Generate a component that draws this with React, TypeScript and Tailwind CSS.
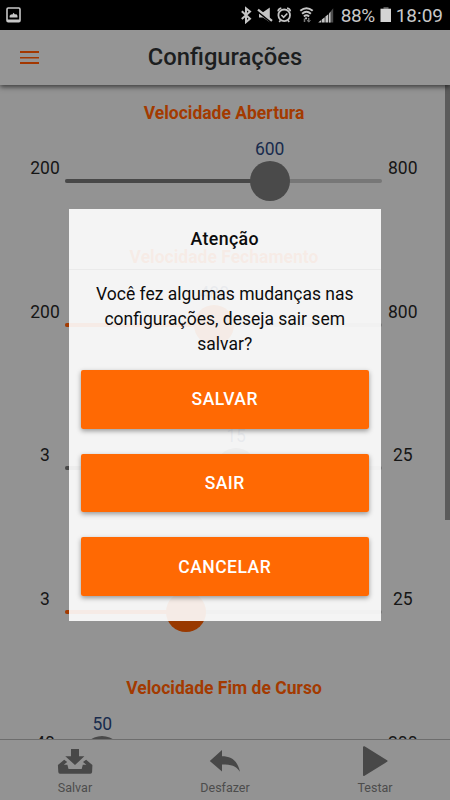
import React from "react";

type Setting = {
  title: string;
  min: number;
  max: number;
  value: number;
  active: boolean;
};

const settings: Setting[] = [
  { title: "Velocidade Abertura", min: 200, max: 800, value: 600, active: false },
  { title: "Velocidade Fechamento", min: 200, max: 800, value: 480, active: true },
  { title: "", min: 3, max: 25, value: 15, active: false },
  { title: "", min: 3, max: 25, value: 11, active: true },
  { title: "Velocidade Fim de Curso", min: 40, max: 200, value: 50, active: false },
];

function StatusBar() {
  return (
    <div className="flex h-[30px] shrink-0 items-center bg-black pl-[6px] pr-[7px] text-[#c8c8c8]">
      <svg width="15" height="16" viewBox="0 0 15 16">
        <rect x="1" y="1" width="13" height="13.6" rx="1.2" fill="none" stroke="#c8c8c8" strokeWidth="1.6" />
        <path d="M1 12.5h13v2H1zM3.6 10.6V8.7l1.5-1.5 1 .6 1.5-2 1.4 1.7 1.2-.4 1.3 1.6v1.9z" fill="#c8c8c8" />
      </svg>
      <div className="ml-auto flex items-center">
        <svg width="100" height="18" viewBox="241 6 100 18" className="mr-[1px]" fill="none" stroke="#c4c4c4">
          <path d="M242.8 11.2l8.2 7.6-4 3.3V8.4l4 3.1-8.2 7.4" strokeWidth="2" />
          <path d="M260 12.3h4l6.8-4.7v14.6l-6.8-4.6h-4z" fill="#c4c4c4" stroke="none" />
          <path d="M258 10.8l14.5 11.6" stroke="#000" strokeWidth="2" />
          <path d="M259 9.6l14 11.2" strokeWidth="2.2" />
          <circle cx="285.2" cy="15.3" r="5.8" strokeWidth="1.8" />
          <path d="M282.4 15l2.2 2.3 3.7-3.8" strokeWidth="1.6" />
          <path d="M279 11.3a4 4 0 0 1 3.3-3.2M291.4 11.3a4 4 0 0 0-3.3-3.2M281.6 20.2l-1.4 1.8M288.8 20.2l1.4 1.8" strokeWidth="1.6" />
          <path d="M301.3 10.8q6.2-5.2 12.4 0M303.1 13.7q4.4-3.8 8.8 0M304.9 16.4q2.6-2.3 5.2 0" strokeWidth="2" />
          <circle cx="307" cy="18.3" r="1.1" fill="#c4c4c4" stroke="none" />
          <path d="M305.5 22v-3.4M309.7 18v4" stroke="#777" strokeWidth="1.5" />
          <path d="M308 20l1.7 2.2 1.8-2.2" stroke="#777" />
          <path d="M319.2 22.6l3-2.5v2.5zM322.8 19.4l2.9-2.2v5.4h-2.9zM326.4 16.5l2.9-2.2v8.3h-2.9z" fill="#c4c4c4" stroke="none" />
          <path d="M330 13.5l4.2-5.3v14.4H330z" fill="#4d4d4d" stroke="none" />
          <path d="M330 13.5l1.5-1.7v10.8H330z" fill="#c4c4c4" stroke="none" />
        </svg>
        <span className="mt-px w-[38px] whitespace-nowrap text-[19px] leading-6 tracking-[-0.4px]">88%</span>
        <svg width="12" height="16" viewBox="0 0 12 16" className="ml-px mr-[4px]">
          <path d="M3.5 0h5v2h-5z" fill="#555" />
          <path d="M.5 1.7h10.5V15H.5z" fill="#d4d4d4" />
        </svg>
        <span className="mt-px text-[19px] leading-6">18:09</span>
      </div>
    </div>
  );
}

function Header() {
  return (
    <header className="relative z-10 grid h-[55px] shrink-0 grid-cols-[60px_1fr_60px] items-center bg-[#959595] shadow-[0_2px_5px_rgba(0,0,0,0.6)]">
      <div className="ml-5 flex w-[19px] flex-col">
        <span className="h-[2px] bg-[#a33700]" />
        <span className="mt-[4px] h-[1px] bg-[#a33700]" />
        <span className="h-[1px] bg-[#a33700]/50" />
        <span className="mt-[3px] h-[2px] bg-[#a33700]" />
      </div>
      <h1 className="-mt-px text-center text-[23.75px] font-medium leading-8 text-[#1c1e1f]">Configurações</h1>
    </header>
  );
}

function SliderSetting({ title, min, max, value, active }: Setting) {
  const left = 20 + ((value - min) / (max - min)) * 277;
  return (
    <section className="h-[143.7px] pt-4">
      <h2 className="h-6 pr-[2px] text-center text-[17.5px] font-bold leading-6 text-[#a33a00]">{title}</h2>
      <div className="mt-3 grid grid-cols-[65px_317px_68px] text-[17.5px] leading-6 text-[#161616]">
        <span className="ml-[25px] w-10 pt-[19px] text-center">{min}</span>
        <div>
          <div className="relative h-6 text-[#182b4d]">
            <span className="absolute -translate-x-1/2" style={{ left }}>{value}</span>
          </div>
          <div className="relative flex h-10 items-center">
            <div className="h-1 w-full rounded-sm bg-[#777]">
              <div className={"h-1 rounded-sm " + (active ? "bg-[#a33a00]" : "bg-[#484848]")} style={{ width: left }} />
            </div>
            <div
              className={"absolute top-0 size-10 -translate-x-1/2 rounded-full " + (active ? "bg-[#993900]" : "bg-[#4a4a4a]")}
              style={{ left }}
            />
          </div>
        </div>
        <span className="w-[41.5px] pt-[19px] text-center">{max}</span>
      </div>
    </section>
  );
}

function Footer() {
  return (
    <footer className="grid h-[61px] shrink-0 grid-cols-3 border-t border-[#6d6d6d] bg-[#939393] text-center text-[12.5px] leading-4 text-[#4c4c4c]">
      <div className="flex flex-col items-center">
        <svg width="36" height="40" viewBox="57 740 36 40" fill="#484848">
          <path d="M71 749h8v7.3h5.4L75 765l-9.7-8.7H71z" />
          <path d="M64.2 759.8l3 2.2-3.4 2.8h3.6l1.1 4.1h13.2l1.1-4.1h3.6L83 762l3.1-2.2 6.3 5.2-.3 7q-.1 1.7-1.7 1.7H60q-1.6 0-1.7-1.7l-.4-7z" />
        </svg>
        <span>Salvar</span>
      </div>
      <div className="flex flex-col items-center">
        <svg width="36" height="40" viewBox="207 740 36 40" fill="#484848">
          <path d="M209.8 761L222 750v6.3c9.3 0 15.4 4 18 15.5-4.2-6-8.6-7.2-18-7.2v6.9z" />
        </svg>
        <span>Desfazer</span>
      </div>
      <div className="flex flex-col items-center">
        <svg width="36" height="40" viewBox="357 740 36 40" fill="#484848" stroke="#484848" strokeWidth="2" strokeLinejoin="round">
          <path d="M364 747.2L386.5 761 364 775z" />
        </svg>
        <span>Testar</span>
      </div>
    </footer>
  );
}

function ConfirmDialog() {
  return (
    <div
      role="dialog"
      className="absolute left-[68.5px] top-[208.5px] z-20 flex h-[412.5px] w-[312.5px] flex-col bg-white/90 text-[#0c0c0c]"
    >
      <h2 className="h-[61px] border-b border-[#eaeaea] text-center text-[17.75px] font-medium leading-[60px] tracking-[0.35px]">
        Atenção
      </h2>
      <p className="mt-[12px] whitespace-nowrap text-center text-[17.5px] leading-[25px]">
        Você fez algumas mudanças nas
        <br />
        configurações, deseja sair sem
        <br />
        salvar?
      </p>
      <div className="mx-[12.5px] mt-[13.4px] flex flex-col gap-[25px]">
        {["SALVAR", "SAIR", "CANCELAR"].map((label) => (
          <button
            key={label}
            className="h-[58.75px] rounded-[2px] bg-[#ff6700]/99 text-[17.5px] font-medium tracking-[0.5px] text-white shadow-[0_2px_5px_rgba(0,0,0,0.38)]"
          >
            {label}
          </button>
        ))}
      </div>
    </div>
  );
}

export default function App() {
  return (
    <div className="relative flex h-[800px] w-[450px] flex-col overflow-hidden bg-[#939393] font-['Roboto',sans-serif]">
      <StatusBar />
      <Header />
      <main className="relative min-h-0 flex-1 overflow-hidden">
        {settings.map((setting, i) => (
          <SliderSetting key={i} {...setting} />
        ))}
        <div className="absolute right-0 top-0 h-[435px] w-[5px] bg-[#5b5b5b]" />
      </main>
      <Footer />
      <ConfirmDialog />
    </div>
  );
}
